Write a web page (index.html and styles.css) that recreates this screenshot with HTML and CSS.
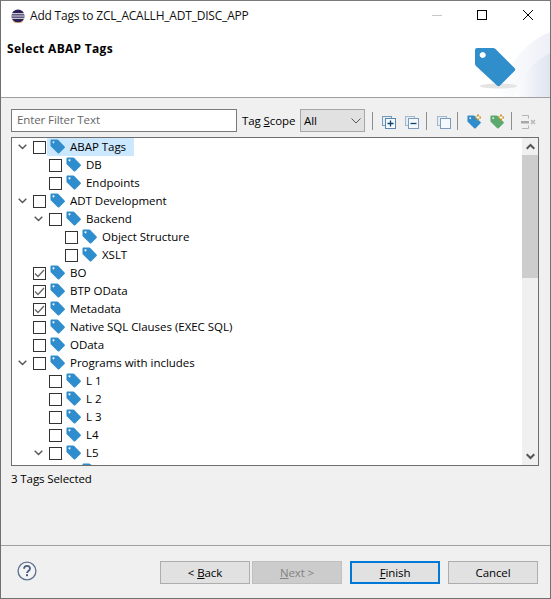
FILE: index.html
```html
<!DOCTYPE html>
<html lang="en">
<head>
    <meta charset="UTF-8">
    <title>Add Tags</title>
    <link rel="stylesheet" href="styles.css">
</head>
<body>
    <svg class="defs" width="0" height="0">
        <symbol id="tag" viewBox="0 0 16 16">
            <path fill-rule="evenodd" fill="currentColor" d="M1.500.500h6q.8 0 1.400.6l6.600 6.800q.8.800 0 1.600l-5.600 5.600q-.8.800-1.600 0L1 8q-.5-.5-.5-1.200V1.500q0-1 1-1zM3.700 2.500a1 1 0 1 0 .01 0z"/>
        </symbol>
        <symbol id="chevron" viewBox="0 0 9 6">
            <path d="M.7.700L4.500 4.500 8.300.7" fill="none" stroke="#555" stroke-width="1.400"/>
        </symbol>
        <symbol id="check" viewBox="0 0 11 9">
            <path d="M1 4.500L4 7.500 10 1" fill="none" stroke="#666" stroke-width="1.300"/>
        </symbol>
    </svg>
    <div class="dialog">
        <div class="titlebar">
            <svg class="app-icon" width="14" height="14" viewBox="0 0 16 16">
                <circle cx="8" cy="8" r="7.500" fill="#2c2255"/>
                <path d="M1 5.500h14M.6 8h14.800M1 10.500h14" stroke="#fff" stroke-width="1.200"/>
                <path d="M2 13.500a8 8 0 0 0 12 0" stroke="#f7941e" stroke-width="0.800" fill="none"/>
            </svg>
            <span class="title">Add Tags to ZCL_ACALLH_ADT_DISC_APP</span>
            <div class="win-buttons">
                <svg width="46" height="29" viewBox="0 0 46 29"><path d="M20 14.500h10" stroke="#c8c8c8"/></svg>
                <svg width="46" height="29" viewBox="0 0 46 29"><rect x="19.500" y="9.500" width="9" height="9" fill="none" stroke="#000"/></svg>
                <svg width="46" height="29" viewBox="0 0 46 29"><path d="M19 9l10 10M29 9L19 19" stroke="#000" fill="none"/></svg>
            </div>
        </div>
        <div class="banner">
            <h1>Select ABAP Tags</h1>
            <svg class="banner-art" width="80" height="67" viewBox="0 0 80 67">
                <defs>
                    <linearGradient id="fade" x1="0" y1="0" x2="1" y2="0">
                        <stop offset="0" stop-color="#fff"/>
                        <stop offset="1" stop-color="#dfe4f0"/>
                    </linearGradient>
                </defs>
                <path d="M25 67C35 38 55 12 80 2V67z" fill="url(#fade)" opacity=".55"/>
                <path d="M43 67C50 48 62 32 80 23V67z" fill="url(#fade)"/>
                <ellipse cx="28.500" cy="56" rx="18.500" ry="2.500" fill="#e4e4e4"/>
                <path fill-rule="evenodd" fill="#308ecb" d="M7 18H23q1.500 0 2.500 1L44.500 38q1.500 1.500 0 3L30 55.500q-1.500 1.500-3 0L6 36q-1-1-1-2.500V20q0-2 2-2zM12.700 22a3 3 0 1 0 .01 0z"/>
            </svg>
        </div>
        <div class="body">
            <div class="toolbar">
                <input class="filter" type="text" placeholder="Enter Filter Text">
                <span class="scope-label">Tag <u>S</u>cope</span>
                <div class="select">
                    <span>All</span>
                    <svg width="10" height="6" viewBox="0 0 10 6"><path d="M.5.500L5 5 9.500.500" fill="none" stroke="#555"/></svg>
                </div>
                <div class="tools">
                    <i class="sep"></i>
                    <svg class="tool" width="16" height="16" viewBox="0 0 16 16">
                        <rect x="1.500" y="3.500" width="9" height="9" fill="#e4eef7" stroke="#7d99b8"/>
                        <rect x="4.500" y="5.500" width="10" height="10" fill="#f4f9fd" stroke="#5d86ad"/>
                        <path d="M6.500 10.500h6M9.500 7.500v6" stroke="#10456f" stroke-width="1.300"/>
                    </svg>
                    <svg class="tool" width="16" height="16" viewBox="0 0 16 16">
                        <rect x="1.500" y="3.500" width="9" height="9" fill="#e4eef7" stroke="#a3b7cc"/>
                        <rect x="4.500" y="5.500" width="10" height="10" fill="#f4f9fd" stroke="#7d9cbb"/>
                        <path d="M6.500 10.500h6" stroke="#10456f" stroke-width="1.300"/>
                    </svg>
                    <i class="sep"></i>
                    <svg class="tool tool-third" width="16" height="16" viewBox="0 0 16 16">
                        <rect x="1.500" y="3.500" width="9" height="9" fill="#e4eef7" stroke="#a3b7cc"/>
                        <rect x="4.500" y="5.500" width="10" height="10" fill="#f4f9fd" stroke="#7d9cbb"/>
                    </svg>
                    <i class="sep"></i>
                    <svg class="tool tag-blue" width="16" height="16" viewBox="0 0 16 16">
                        <use href="#tag" x="1" y="2" width="14" height="14"/>
                        <path d="M12 1.500v6M9 4.500h6" stroke="#c99a2e" stroke-width="2"/>
                        <path d="M12 3v3M10.500 4.500h3" stroke="#fff"/>
                    </svg>
                    <svg class="tool tag-green" width="16" height="16" viewBox="0 0 16 16">
                        <use href="#tag" x="1" y="2" width="14" height="14"/>
                        <path d="M12 1.500v6M9 4.500h6" stroke="#c99a2e" stroke-width="2"/>
                        <path d="M12 3v3M10.500 4.500h3" stroke="#fff"/>
                    </svg>
                    <i class="sep"></i>
                    <svg class="tool" width="16" height="16" viewBox="0 0 16 16">
                        <path d="M2 2.500h6.500v3M2 15.500h6.500v-3" fill="none" stroke="#b5b5b5"/>
                        <rect x="1" y="8" width="8" height="2.500" fill="#a8a8a8"/>
                        <path d="M11 7l4 4M15 7l-4 4" stroke="#b5b5b5" stroke-width="1.400"/>
                    </svg>
                </div>
            </div>

            <div class="tree-box">
                <div class="tree">
                    <div class="row lvl0"><svg class="twisty" width="9" height="6"><use href="#chevron"/></svg><span class="box"></span><span class="item selected"><svg class="tag" width="15" height="15"><use href="#tag"/></svg><span class="label">ABAP Tags</span></span></div>
                    <div class="row lvl1"><i class="no-twisty"></i><span class="box"></span><span class="item"><svg class="tag" width="15" height="15"><use href="#tag"/></svg><span class="label">DB</span></span></div>
                    <div class="row lvl1"><i class="no-twisty"></i><span class="box"></span><span class="item"><svg class="tag" width="15" height="15"><use href="#tag"/></svg><span class="label">Endpoints</span></span></div>
                    <div class="row lvl0"><svg class="twisty" width="9" height="6"><use href="#chevron"/></svg><span class="box"></span><span class="item"><svg class="tag" width="15" height="15"><use href="#tag"/></svg><span class="label">ADT Development</span></span></div>
                    <div class="row lvl1"><svg class="twisty" width="9" height="6"><use href="#chevron"/></svg><span class="box"></span><span class="item"><svg class="tag" width="15" height="15"><use href="#tag"/></svg><span class="label">Backend</span></span></div>
                    <div class="row lvl2"><i class="no-twisty"></i><span class="box"></span><span class="item"><svg class="tag" width="15" height="15"><use href="#tag"/></svg><span class="label">Object Structure</span></span></div>
                    <div class="row lvl2"><i class="no-twisty"></i><span class="box"></span><span class="item"><svg class="tag" width="15" height="15"><use href="#tag"/></svg><span class="label">XSLT</span></span></div>
                    <div class="row lvl0"><i class="no-twisty"></i><span class="box"><svg width="11" height="9"><use href="#check"/></svg></span><span class="item"><svg class="tag" width="15" height="15"><use href="#tag"/></svg><span class="label">BO</span></span></div>
                    <div class="row lvl0"><i class="no-twisty"></i><span class="box"><svg width="11" height="9"><use href="#check"/></svg></span><span class="item"><svg class="tag" width="15" height="15"><use href="#tag"/></svg><span class="label">BTP OData</span></span></div>
                    <div class="row lvl0"><i class="no-twisty"></i><span class="box"><svg width="11" height="9"><use href="#check"/></svg></span><span class="item"><svg class="tag" width="15" height="15"><use href="#tag"/></svg><span class="label">Metadata</span></span></div>
                    <div class="row lvl0"><i class="no-twisty"></i><span class="box"></span><span class="item"><svg class="tag" width="15" height="15"><use href="#tag"/></svg><span class="label">Native SQL Clauses (EXEC SQL)</span></span></div>
                    <div class="row lvl0"><i class="no-twisty"></i><span class="box"></span><span class="item"><svg class="tag" width="15" height="15"><use href="#tag"/></svg><span class="label">OData</span></span></div>
                    <div class="row lvl0"><svg class="twisty" width="9" height="6"><use href="#chevron"/></svg><span class="box"></span><span class="item"><svg class="tag" width="15" height="15"><use href="#tag"/></svg><span class="label">Programs with includes</span></span></div>
                    <div class="row lvl1"><i class="no-twisty"></i><span class="box"></span><span class="item"><svg class="tag" width="15" height="15"><use href="#tag"/></svg><span class="label">L 1</span></span></div>
                    <div class="row lvl1"><i class="no-twisty"></i><span class="box"></span><span class="item"><svg class="tag" width="15" height="15"><use href="#tag"/></svg><span class="label">L 2</span></span></div>
                    <div class="row lvl1"><i class="no-twisty"></i><span class="box"></span><span class="item"><svg class="tag" width="15" height="15"><use href="#tag"/></svg><span class="label">L 3</span></span></div>
                    <div class="row lvl1"><i class="no-twisty"></i><span class="box"></span><span class="item"><svg class="tag" width="15" height="15"><use href="#tag"/></svg><span class="label">L4</span></span></div>
                    <div class="row lvl1"><svg class="twisty" width="9" height="6"><use href="#chevron"/></svg><span class="box"></span><span class="item"><svg class="tag" width="15" height="15"><use href="#tag"/></svg><span class="label">L5</span></span></div>
                    <div class="row lvl2"><i class="no-twisty"></i><span class="item item-cut"><svg class="tag" width="15" height="15"><use href="#tag"/></svg></span></div>
                </div>
                <div class="scrollbar">
                    <div class="arrow"><svg width="9" height="7" viewBox="0 0 9 7"><path d="M.7 5.800L4.500 2 8.300 5.800" fill="none" stroke="#555" stroke-width="2"/></svg></div>
                    <div class="track"><div class="thumb"></div></div>
                    <div class="arrow"><svg width="9" height="7" viewBox="0 0 9 7"><path d="M.7 1.200L4.500 5 8.300 1.200" fill="none" stroke="#555" stroke-width="2"/></svg></div>
                </div>
            </div>

            <div class="status">3 Tags Selected</div>
        </div>
        <div class="footer">
            <svg class="help" width="20" height="20" viewBox="0 0 22 22">
                <circle cx="11" cy="11" r="9.800" fill="#f4f4f6" stroke="#5f7391" stroke-width="1.500"/>
                <path d="M7.800 8.500c0-4.200 6.500-4.200 6.500-.2 0 2.700-3.300 2.500-3.300 5" fill="none" stroke="#4a5f80" stroke-width="2"/>
                <rect x="9.900" y="14.500" width="2.200" height="2.200" fill="#4a5f80"/>
            </svg>
            <div class="buttons">
                <button>&lt; <u>B</u>ack</button>
                <button class="disabled"><u>N</u>ext &gt;</button>
                <button class="default"><u>F</u>inish</button>
                <button class="cancel">Cancel</button>
            </div>
        </div>
    </div>
</body>
</html>
```

FILE: styles.css
```css
* {
    box-sizing: border-box;
}
html, body {
    margin: 0;
    height: 100%;
    overflow: hidden;
}
body {
    font-family: "Open Sans", "Noto Sans", Arial, sans-serif;
    font-size: 11.5px;
    letter-spacing: -0.1px;
    color: #000;
}
.defs {
    position: absolute;
}
.dialog {
    width: 551px;
    height: 599px;
    border: 1px solid #707070;
    border-top-color: #7a7a7a;
    background-color: #f0f0f0;
    display: flex;
    flex-direction: column;
}
.titlebar {
    height: 29px;
    background-color: #fff;
    display: flex;
    align-items: center;
    padding-left: 10px;
    flex-shrink: 0;
}
.title {
    margin-left: 5px;
    font-size: 12px;
    letter-spacing: -0.2px;
    color: #111;
}
.win-buttons {
    margin-left: auto;
    display: flex;
}
.win-buttons svg {
    display: block;
}
.banner {
    height: 68px;
    background-color: #fff;
    display: flex;
    justify-content: space-between;
    border-bottom: 1px solid #a0a0a0;
    flex-shrink: 0;
}
.banner h1 {
    margin: 10px 0 0 6px;
    font-size: 12px;
    font-weight: 700;
    letter-spacing: 0.3px;
    line-height: 18px;
}
.banner-art {
    display: block;
}
.body {
    flex: 1;
    padding: 11px 10px 0;
    display: flex;
    flex-direction: column;
}
.toolbar {
    display: flex;
    align-items: center;
    height: 23px;
}
.filter {
    width: 226px;
    height: 23px;
    flex-shrink: 0;
    border: 1px solid #7a7a7a;
    background-color: #fff;
    padding: 0 5px 2px;
    font: inherit;
    letter-spacing: inherit;
}
.filter::placeholder {
    color: #666;
}
.scope-label {
    width: 58px;
    margin-left: 5px;
    white-space: nowrap;
    flex-shrink: 0;
}
.select {
    width: 65px;
    height: 23px;
    flex-shrink: 0;
    border: 1px solid #a6a6a6;
    background-color: #e1e1e1;
    display: flex;
    align-items: center;
    justify-content: space-between;
    padding: 0 3px;
}
.tools {
    display: flex;
    align-items: center;
    margin-left: 4px;
}
.sep {
    width: 1px;
    height: 18px;
    flex-shrink: 0;
    background-color: #8e8e8e;
    margin: 0 4px 0 3px;
}
.tool {
    margin: 0 3px 0 4px;
    flex-shrink: 0;
}
.tool-third {
    margin-left: 5px;
    margin-right: 2px;
}
.tag-blue, .tag {
    color: #2f8dce;
}
.tag-green {
    color: #5aa96e;
}
.tree-box {
    margin-top: 5px;
    height: 329px;
    width: 528px;
    border: 1px solid #6e6e6e;
    background-color: #fff;
    display: flex;
}
.tree {
    flex: 1;
    overflow: hidden;
}
.row {
    height: 18px;
    display: flex;
    align-items: center;
    white-space: nowrap;
}
.lvl0 {
    padding-left: 6px;
}
.lvl1 {
    padding-left: 22px;
}
.lvl2 {
    padding-left: 38px;
}
.twisty, .no-twisty {
    width: 9px;
    flex-shrink: 0;
    display: block;
}
.no-twisty {
    height: 6px;
}
.box {
    width: 13px;
    height: 13px;
    margin-left: 6px;
    border: 1px solid #333;
    background-color: #fff;
    display: flex;
    align-items: center;
    justify-content: center;
    flex-shrink: 0;
}
.item {
    display: flex;
    align-items: center;
    height: 18px;
    margin-left: 1px;
    padding-left: 3px;
    padding-right: 8px;
}
.item-cut {
    margin-left: 20px;
}
.tag {
    display: block;
    margin-top: -1px;
    flex-shrink: 0;
}
.label {
    margin-left: 5px;
    line-height: 18px;
    letter-spacing: -0.03px;
}
.selected {
    background-color: #cce8ff;
}
.scrollbar {
    width: 16px;
    flex-shrink: 0;
    background-color: #f0f0f0;
    display: flex;
    flex-direction: column;
}
.arrow {
    height: 17px;
    display: flex;
    align-items: center;
    justify-content: center;
}
.track {
    flex: 1;
}
.thumb {
    height: 123px;
    background-color: #cdcdcd;
}
.status {
    margin-top: 4px;
    line-height: 18px;
}
.footer {
    border-top: 1px solid #a0a0a0;
    height: 53px;
    flex-shrink: 0;
    display: flex;
    align-items: flex-start;
    padding: 15px 12px 0 16px;
    justify-content: space-between;
}
.help {
    display: block;
}
.buttons {
    display: flex;
}
button {
    width: 90px;
    height: 23px;
    font: inherit;
    letter-spacing: inherit;
    background-color: #e1e1e1;
    border: 1px solid #adadad;
    padding: 0;
    color: #000;
}
.disabled {
    margin-left: 2px;
    background-color: #cccccc;
    border-color: #bfbfbf;
    color: #838383;
}
.default {
    margin-left: 8px;
    border: 2px solid #0078d7;
}
.cancel {
    margin-left: 8px;
}
```
